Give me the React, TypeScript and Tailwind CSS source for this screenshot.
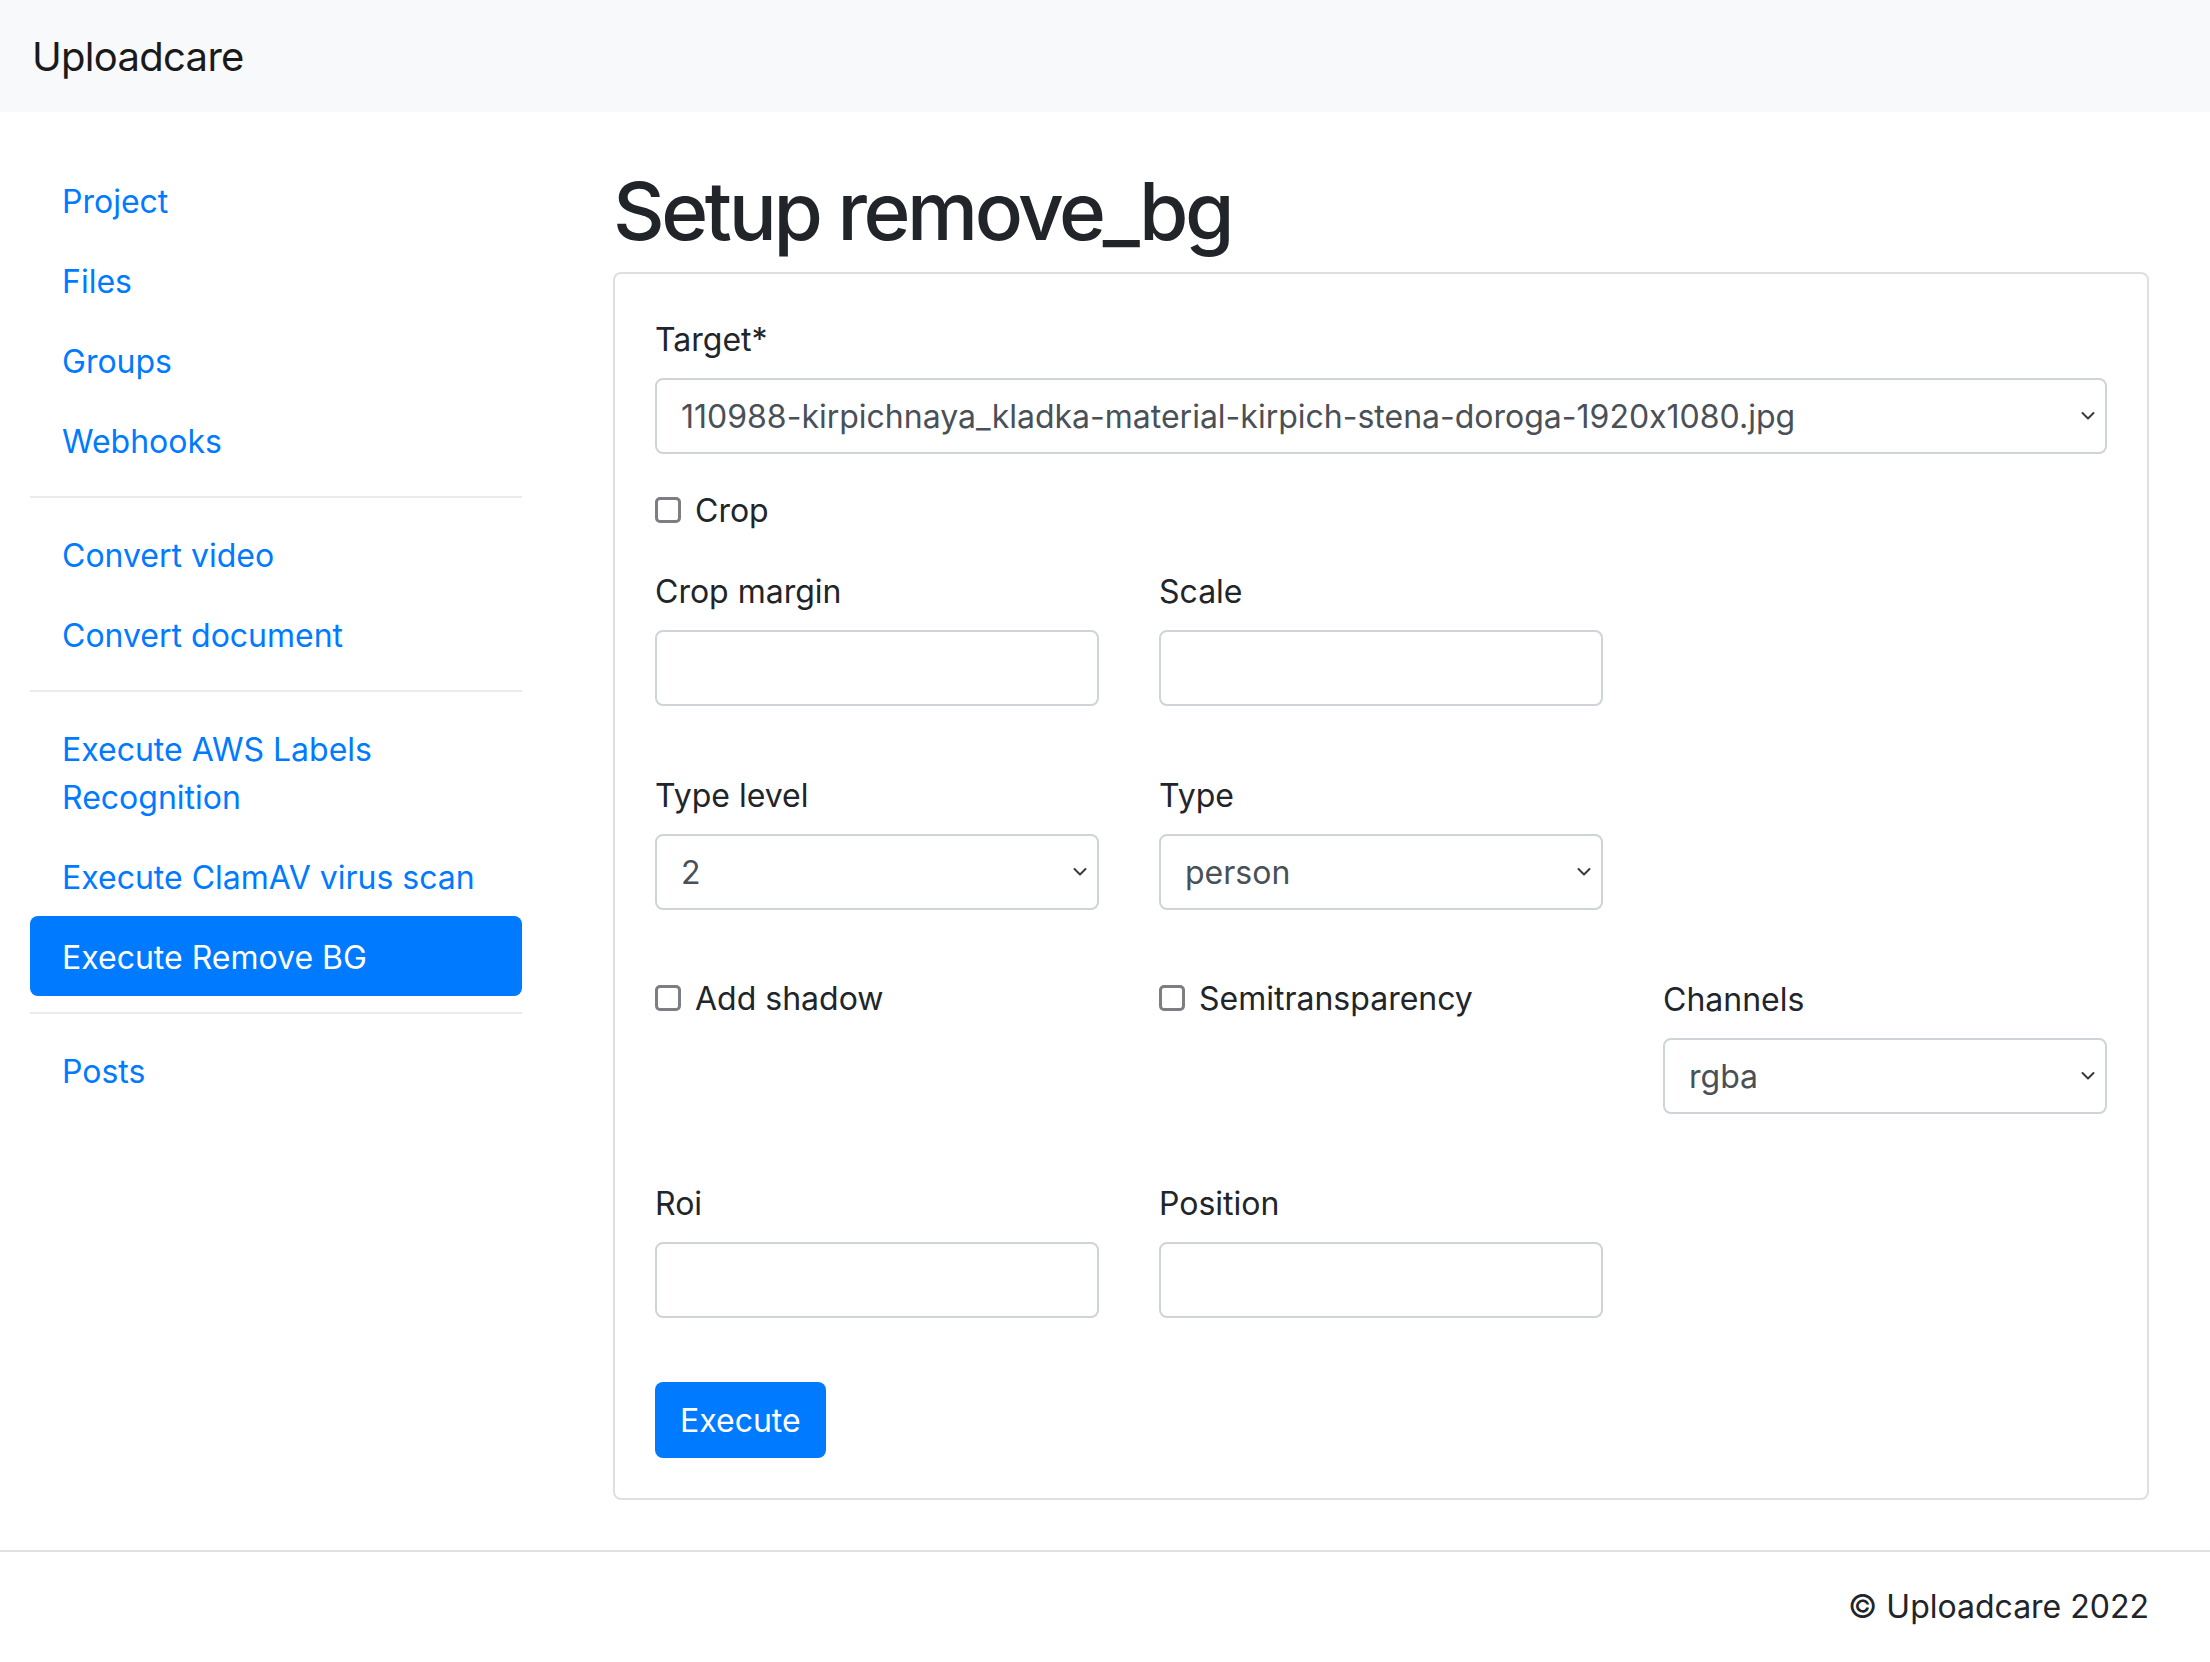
import React from "react";

const Chevron = () => (
  <svg width="14" height="9" viewBox="0 0 14 9" className="absolute right-[10px] top-1/2 -translate-y-1/2" fill="none">
    <path d="M1.5 1.5 L7 7 L12.5 1.5" stroke="#3a3a3c" strokeWidth="2" strokeLinecap="round" strokeLinejoin="round" />
  </svg>
);

const Select = ({ value }: { value: string }) => (
  <div className="relative h-[76px] w-full rounded-[8px] border-2 border-[#ced4da] bg-white pl-[24px] pr-[40px] pt-[2px] flex items-center text-[#495057] overflow-hidden whitespace-nowrap">
    {value}
    <Chevron />
  </div>
);

const Input = () => (
  <div className="h-[76px] w-full rounded-[8px] border-2 border-[#ced4da] bg-white" />
);

const Checkbox = ({ label }: { label: string }) => (
  <div className="flex items-center h-[48px]">
    <div className="w-[26px] h-[26px] rounded-[5px] border-[3px] border-[#7d7d84] bg-white mr-[14px]" />
    <span className="pt-[2px]">{label}</span>
  </div>
);

const Field = ({ label, children }: { label: string; children: React.ReactNode }) => (
  <div className="flex flex-col">
    <div className="h-[48px] mb-[16px] pt-[2px]">{label}</div>
    {children}
  </div>
);

const NavLink = ({ children, active }: { children: React.ReactNode; active?: boolean }) => (
  <div
    className={
      active
        ? "px-[32px] pt-[18px] pb-[14px] rounded-[8px] bg-[#007bff] text-white"
        : "px-[32px] pt-[18px] pb-[14px] text-[#007bff]"
    }
  >
    {children}
  </div>
);

const Divider = () => <div className="my-[16px] h-[2px] bg-[#e9ecef]" />;

export default function App() {
  return (
    <div className="min-h-screen bg-white font-['Inter',sans-serif] [font-feature-settings:'calt'_0] text-[32px] leading-[48px] text-[#212529]">
      <nav className="h-[112px] bg-[#f8f9fa] px-[32px] pt-[2px] flex items-center">
        <span className="text-[40px] leading-[60px] tracking-[-0.7px] text-[#1a1a1a]">Uploadcare</span>
      </nav>
      <div className="flex">
        <aside className="w-[552px] shrink-0 px-[30px] pt-[48px]">
          <NavLink>Project</NavLink>
          <NavLink>Files</NavLink>
          <NavLink>Groups</NavLink>
          <NavLink>Webhooks</NavLink>
          <Divider />
          <NavLink>Convert video</NavLink>
          <NavLink>Convert document</NavLink>
          <Divider />
          <NavLink>
            Execute AWS Labels
            <br />
            Recognition
          </NavLink>
          <NavLink>Execute ClamAV virus scan</NavLink>
          <NavLink active>Execute Remove BG</NavLink>
          <Divider />
          <NavLink>Posts</NavLink>
        </aside>
        <main className="flex-1 pl-[61px] pr-[61px] pt-[48px] pb-[50px]">
          <h1 className="text-[80px] leading-[96px] font-medium mb-[16px] pt-[3px] h-[96px] tracking-[-3.4px]">Setup remove_bg</h1>
          <div className="rounded-[8px] border-2 border-[#dfdfdf] p-[40px]">
            <Field label="Target*">
              <Select value="110988-kirpichnaya_kladka-material-kirpich-stena-doroga-1920x1080.jpg" />
            </Field>
            <div className="mt-[32px]">
              <Checkbox label="Crop" />
            </div>
            <div className="mt-[32px] flex flex-col gap-[64px]">
              <div className="grid grid-cols-3 gap-x-[60px]">
                <Field label="Crop margin">
                  <Input />
                </Field>
                <Field label="Scale">
                  <Input />
                </Field>
                <div />
              </div>
              <div className="grid grid-cols-3 gap-x-[60px]">
                <Field label="Type level">
                  <Select value="2" />
                </Field>
                <Field label="Type">
                  <Select value="person" />
                </Field>
                <div />
              </div>
              <div className="grid grid-cols-3 gap-x-[60px]">
                <div>
                  <Checkbox label="Add shadow" />
                </div>
                <div>
                  <Checkbox label="Semitransparency" />
                </div>
                <Field label="Channels">
                  <Select value="rgba" />
                </Field>
              </div>
              <div className="grid grid-cols-3 gap-x-[60px]">
                <Field label="Roi">
                  <Input />
                </Field>
                <Field label="Position">
                  <Input />
                </Field>
                <div />
              </div>
              <div>
                <button className="h-[76px] px-[25px] pt-[2px] rounded-[8px] bg-[#007bff] text-white leading-[48px]">
                  Execute
                </button>
              </div>
            </div>
          </div>
        </main>
      </div>
      <footer className="border-t-2 border-[#dee2e6] pt-[31px] pb-[32px] pr-[61px] flex justify-end">
        <span>© Uploadcare 2022</span>
      </footer>
    </div>
  );
}
